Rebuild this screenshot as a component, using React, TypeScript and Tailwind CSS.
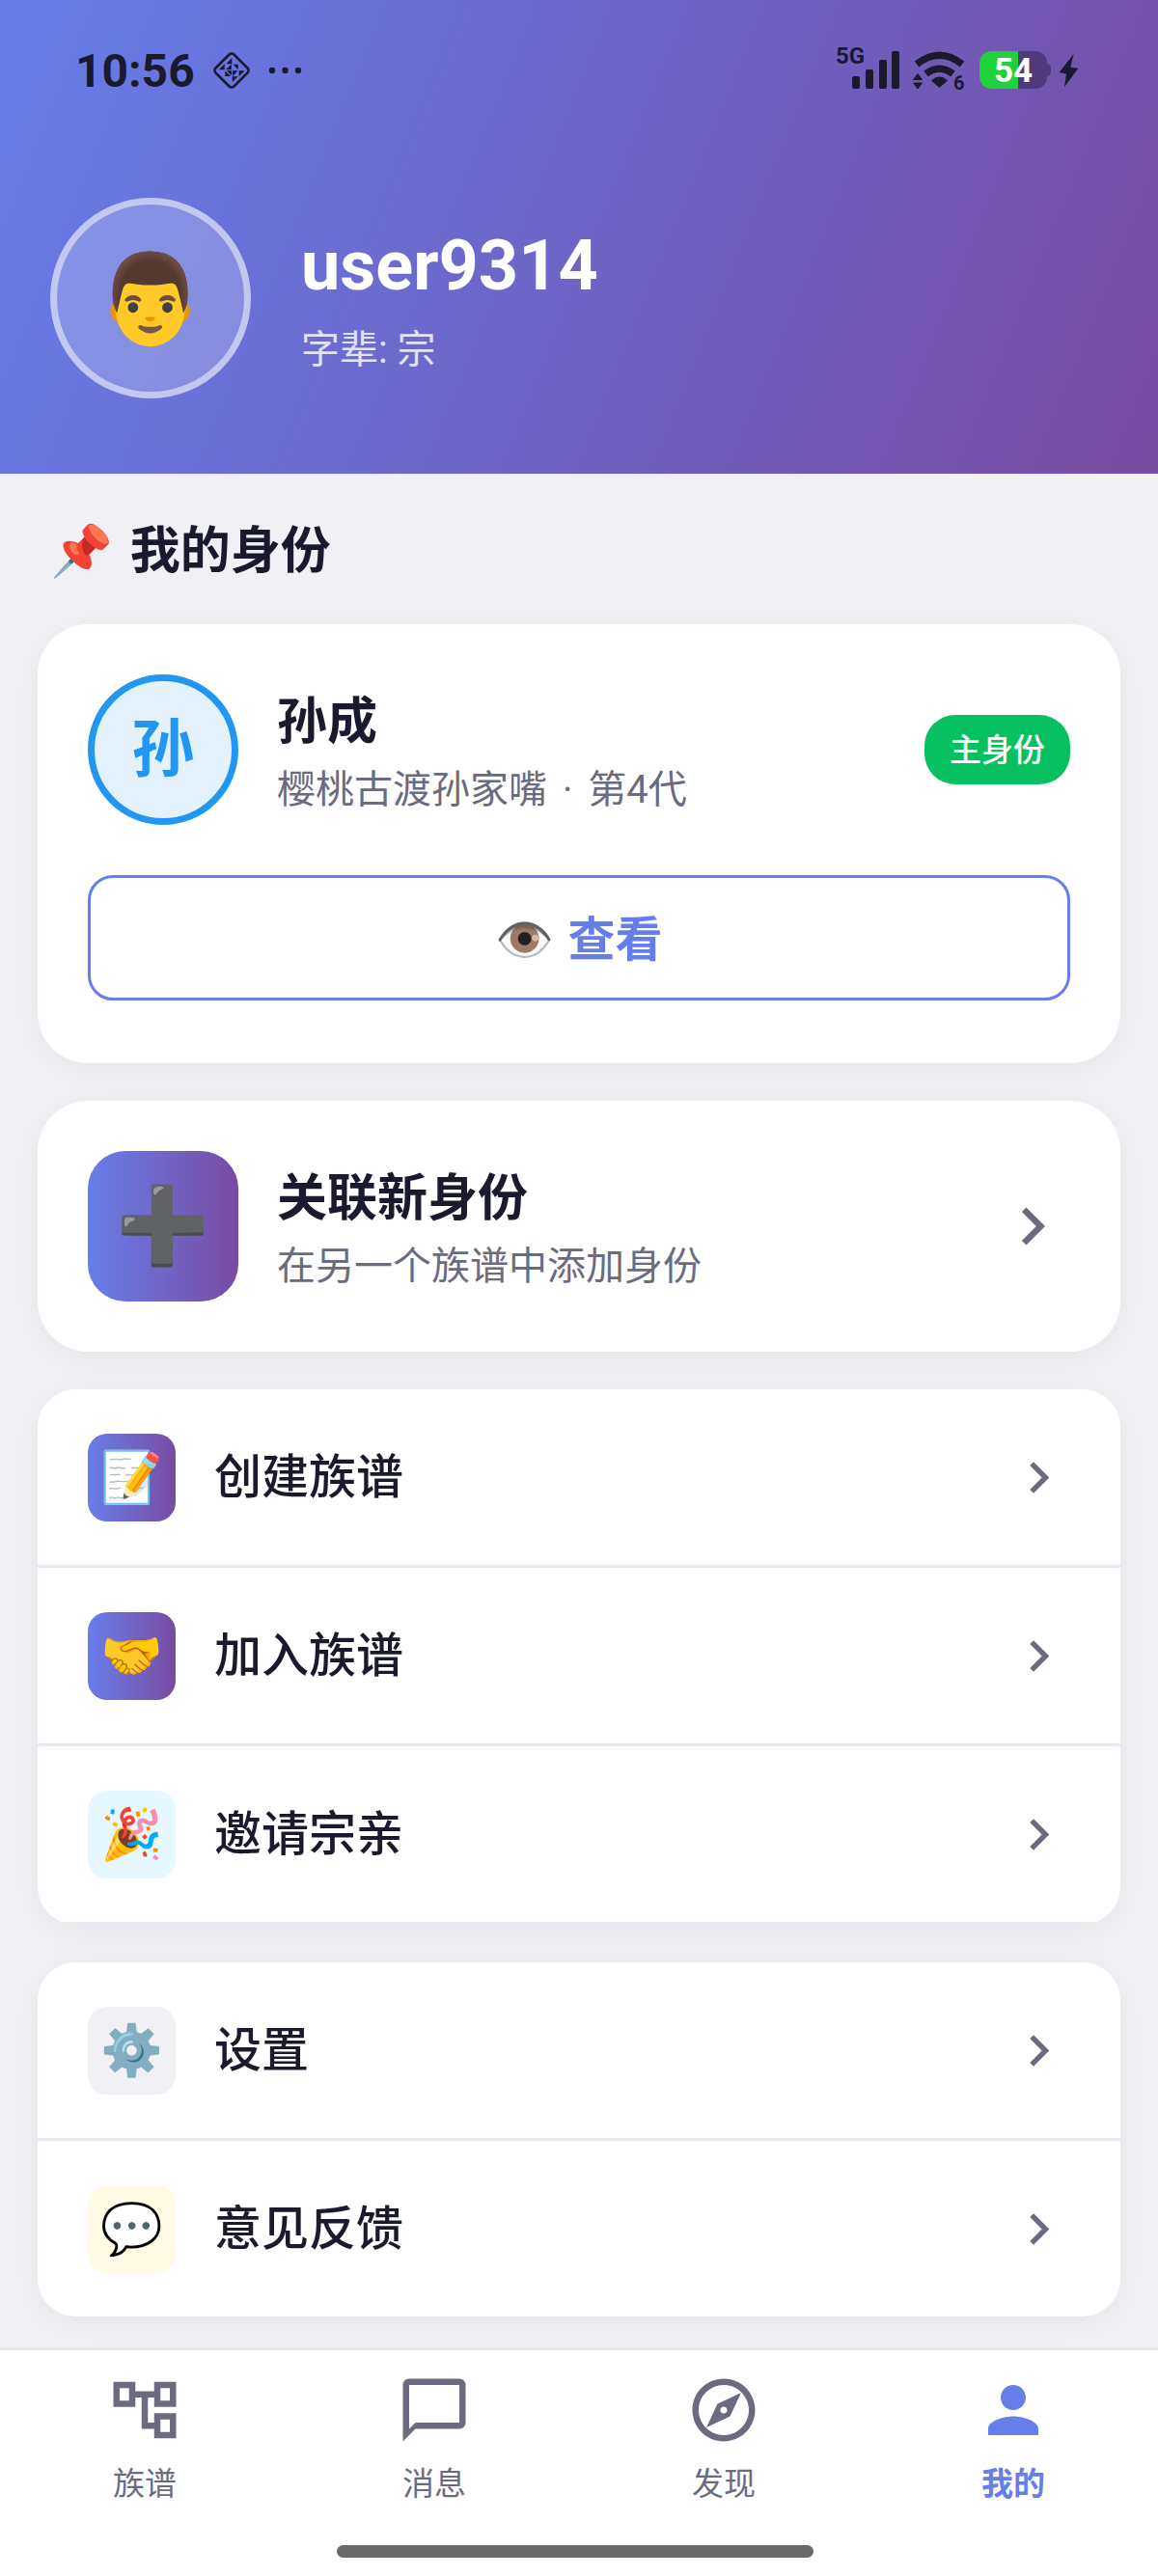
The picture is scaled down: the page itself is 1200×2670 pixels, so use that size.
import {
  MdChatBubbleOutline,
  MdChevronRight,
  MdOutlineAccountTree,
  MdOutlineExplore,
  MdPerson,
} from 'react-icons/md';
import type { IconType } from 'react-icons';

interface MenuItem {
  emoji: string;
  label: string;
  tile: string;
}

interface Tab {
  label: string;
  icon: IconType;
  active?: boolean;
}

const familyMenu: MenuItem[] = [
  { emoji: '📝', label: '创建族谱', tile: 'bg-linear-to-r from-[#667eea] to-[#764ba2]' },
  { emoji: '🤝', label: '加入族谱', tile: 'bg-linear-to-r from-[#667eea] to-[#764ba2]' },
  { emoji: '🎉', label: '邀请宗亲', tile: 'bg-[#e6f7ff]' },
];

const appMenu: MenuItem[] = [
  { emoji: '⚙️', label: '设置', tile: 'bg-[#f0f0f5]' },
  { emoji: '💬', label: '意见反馈', tile: 'bg-[#fffbe6]' },
];

const tabs: Tab[] = [
  { label: '族谱', icon: MdOutlineAccountTree },
  { label: '消息', icon: MdChatBubbleOutline },
  { label: '发现', icon: MdOutlineExplore },
  { label: '我的', icon: MdPerson, active: true },
];

function StatusBar() {
  return (
    <div className="flex h-[146px] items-center justify-between pl-[78px] pr-[81px] text-[#1a1a2e]">
      <div className="flex items-center gap-[18px]">
        <span className="pt-[2px] text-[48px] font-bold leading-none">10:56</span>
        <svg width="40" height="40" viewBox="0 0 40 40" fill="currentColor">
          <rect
            x="6.6" y="6.6" width="26.8" height="26.8" rx="3.5"
            transform="rotate(45 20 20)"
            fill="none" stroke="currentColor" strokeWidth="2.6"
          />
          <path d="M20.3 7v6.2h-6zM6.7 19.3l6-6v6zM21.3 13.7h5.6v5.6zM14 19.3l5.8-5.8v5.8zM27.7 20.3h6l-6 6zM20.7 26.3h6l-6 6zM13.3 20.5v5.6h5.7zM14.8 20.3h5.2v5.2zM21 20.3h5.6l-5.6 5.6z" />
        </svg>
        <svg width="36" height="40" viewBox="0 0 36 40" fill="currentColor">
          <circle cx="4" cy="20" r="3.2" />
          <circle cx="17.5" cy="20" r="3.2" />
          <circle cx="31" cy="20" r="3.2" />
        </svg>
      </div>

      <div className="flex items-center gap-2">
        <svg width="72" height="60" viewBox="0 -6 72 60" fill="currentColor">
          <text x="1" y="17" fontSize="24" fontWeight="700">5G</text>
          <rect x="18" y="30" width="8" height="13" rx="2" />
          <rect x="32" y="23" width="8" height="20" rx="2" />
          <rect x="46" y="13" width="8" height="30" rx="2" />
          <rect x="59" y="4" width="8" height="39" rx="2" />
        </svg>
        <svg width="62" height="48" viewBox="0 0 62 48" fill="currentColor">
          <path d="M5 17.5Q28.5-1 52 17.5M14.5 27.5Q28.5 17 42.5 27.5" fill="none" stroke="currentColor" strokeWidth="7.5" />
          <path d="M21 34.5Q28.5 28 36 34.5L28.5 41z" stroke="currentColor" strokeWidth="1.5" strokeLinejoin="round" />
          <path d="M6 27.5l4.5 6h-9zM6 43l4.5-6h-9z" stroke="currentColor" strokeLinejoin="round" />
          <text x="43" y="44" fontSize="20" fontWeight="700">6</text>
        </svg>
        <svg width="74" height="48" viewBox="0 0 74 48">
          <path d="M12 4h46a12 12 0 0 1 12 12v1q4 1 4 4v5q0 3-4 4v1a12 12 0 0 1-12 12H12A12 12 0 0 1 0 31V16A12 12 0 0 1 12 4z" fill="#503a7b" />
          <path d="M12 4h28v39H12A12 12 0 0 1 0 31V16A12 12 0 0 1 12 4z" fill="#1fd13a" />
          <text x="35" y="36" fontSize="35" fontWeight="700" fill="#fff" textAnchor="middle">54</text>
        </svg>
        <svg width="22" height="48" viewBox="0 0 22 48" fill="currentColor">
          <path d="M15.7 6.7L.7 26l7.3 1.7-2 13.6 14.3-19.6-8-1z" />
        </svg>
      </div>
    </div>
  );
}

function MenuCard({ items, closed }: { items: MenuItem[]; closed?: boolean }) {
  return (
    <ul className="overflow-hidden rounded-[39px] bg-white shadow-[0_7px_39px_rgba(0,0,0,0.05)]">
      {items.map((item, i) => (
        <li
          key={item.label}
          className={closed || i < items.length - 1 ? 'border-b-[3px] border-[#e8e8f0]' : ''}
        >
          <button className="flex w-full items-center px-[52px] pt-[46px] pb-[45px] text-left">
            <span className={`flex size-[91px] items-center justify-center rounded-[20px] text-[52px] leading-none ${item.tile}`}>
              {item.emoji}
            </span>
            <span className="ml-10 flex-1 text-[49px] font-medium leading-[65px]">{item.label}</span>
            <MdChevronRight className="size-[65px] text-[#6b6b80]" />
          </button>
        </li>
      ))}
    </ul>
  );
}

export default function App() {
  return (
    <div className="flex min-h-screen flex-col bg-[#f0f0f5] text-[#1a1a2e] font-['Roboto','Noto_Sans_CJK_SC','Noto_Color_Emoji',sans-serif]">
      <header className="bg-[linear-gradient(112deg,#667eea,#764ba2)]">
        <StatusBar />
        <div className="flex items-center gap-[52px] px-[52px] pt-[59px] pb-[78px]">
          <div className="flex size-[208px] items-center justify-center rounded-full border-[7px] border-white/50 bg-white/20 pt-[2px] text-[91px] leading-none">
            👨
          </div>
          <div className="flex flex-col gap-4 text-white">
            <h1 className="text-[72px] font-bold leading-[91px]">user9314</h1>
            <p className="text-[40px] leading-[52px] text-white/80">字辈: 宗</p>
          </div>
        </div>
      </header>

      <main className="flex-1 px-[39px] pb-[31px]">
        <h2 className="flex items-center gap-[18px] px-[13px] pt-[55px] pb-[49px] text-[52px] font-bold leading-[52px]">
          <span>📌</span>我的身份
        </h2>

        <div className="flex flex-col gap-[39px]">
          <section className="rounded-[52px] bg-white px-[52px] pt-[52px] pb-[65px] shadow-[0_7px_39px_rgba(0,0,0,0.05)]">
            <div className="flex items-center">
              <div className="flex size-[156px] items-center justify-center rounded-full border-[7px] border-[#2196f3] bg-[#e3f2fd] text-[65px] font-bold leading-none text-[#2196f3]">
                孙
              </div>
              <div className="ml-10 flex flex-1 flex-col gap-3 pt-[6px]">
                <h3 className="text-[52px] font-bold leading-[65px]">孙成</h3>
                <p className="text-[40px] leading-[52px] text-[#6b6b80]">
                  樱桃古渡孙家嘴 <span className="mx-[6px]">·</span> 第4代
                </p>
              </div>
              <span className="rounded-[32px] bg-[#07c160] px-[26px] pt-[14px] pb-3 text-[33px] font-medium leading-[46px] text-white">
                主身份
              </span>
            </div>
            <button className="mt-[52px] flex h-[130px] w-full items-center justify-center gap-[14px] rounded-[26px] border-[3px] border-[#667eea] pt-[6px] text-[49px] font-bold text-[#667eea]">
              <span>👁️</span>查看
            </button>
          </section>

          <button className="flex items-center rounded-[52px] bg-white p-[52px] text-left shadow-[0_7px_39px_rgba(0,0,0,0.05)]">
            <span className="flex size-[156px] items-center justify-center rounded-[39px] bg-linear-to-r from-[#667eea] to-[#764ba2] text-[78px] leading-none">
              ➕
            </span>
            <span className="ml-10 flex flex-1 flex-col gap-3 pt-[6px]">
              <span className="text-[52px] font-bold leading-[65px]">关联新身份</span>
              <span className="text-[40px] leading-[52px] text-[#6b6b80]">在另一个族谱中添加身份</span>
            </span>
            <MdChevronRight className="size-[78px] text-[#6b6b80]" />
          </button>

          <MenuCard items={familyMenu} closed />
          <MenuCard items={appMenu} />
        </div>
      </main>

      <footer className="border-t-[3px] border-[#e8e8f0] bg-white pt-[23px] pb-[19px]">
        <nav className="grid grid-cols-4">
          {tabs.map(({ label, icon: Icon, active }) => (
            <a
              key={label}
              href="#"
              className={`flex flex-col items-center gap-[18px] ${active ? 'font-bold text-[#667eea]' : 'text-[#6b6b80]'}`}
            >
              <Icon className="size-[78px]" />
              <span className="text-[33px] leading-[40px]">{label}</span>
            </a>
          ))}
        </nav>
        <div className="mt-[43px] flex justify-center pr-2">
          <div className="h-[13px] w-[494px] rounded-full bg-[#6a6a6a]" />
        </div>
      </footer>
    </div>
  );
}
